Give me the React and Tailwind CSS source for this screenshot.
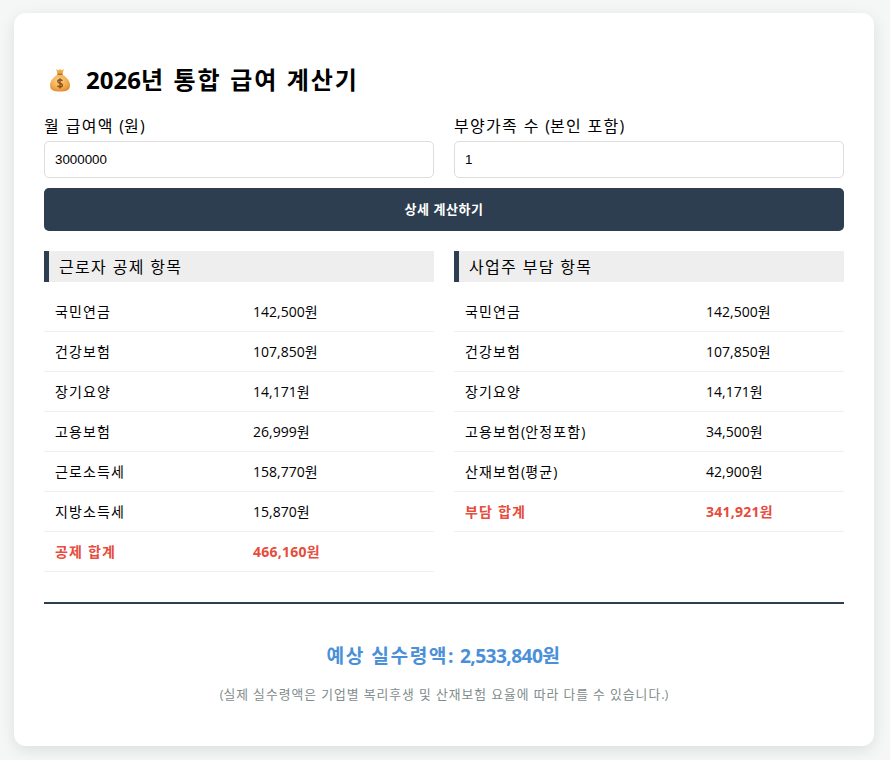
const FONT = "font-['Open_Sans','Noto_Sans_CJK_KR',sans-serif] [word-spacing:0.09em]";

const deductions = [
  ['국민연금', '142,500원'],
  ['건강보험', '107,850원'],
  ['장기요양', '14,171원'],
  ['고용보험', '26,999원'],
  ['근로소득세', '158,770원'],
  ['지방소득세', '15,870원'],
];

const employer = [
  ['국민연금', '142,500원'],
  ['건강보험', '107,850원'],
  ['장기요양', '14,171원'],
  ['고용보험(안정포함)', '34,500원'],
  ['산재보험(평균)', '42,900원'],
];

// Hangul in the reference sits on a full em, Noto's is narrower
const Ko = ({ children }) =>
  children.split(/([가-힣]+)/).map((part, i) =>
    /[가-힣]/.test(part) ? <span key={i} className="tracking-[0.08em]">{part}</span> : part
  );

const MoneyBag = () => (
  <svg width="24" height="24" viewBox="0 0 24 24" className="shrink-0">
    <defs>
      <radialGradient id="bag" cx="0.45" cy="0.35" r="0.8">
        <stop offset="0" stopColor="#fbd58c" />
        <stop offset="0.6" stopColor="#f0a648" />
        <stop offset="1" stopColor="#d9772a" />
      </radialGradient>
    </defs>
    <path d="M8.2 1 L10.4 2.4 L12 1 L13.6 2.4 L15.8 1 L14.6 5.8 H9.4 Z" fill="#f0a93f" />
    <rect x="9.2" y="5.4" width="5.6" height="1.5" rx="0.7" fill="#a8611f" />
    <path d="M9.4 6.8 C5.5 9 2 13 2 17.4 C2 22 6 23.5 12 23.5 C18 23.5 22 22 22 17.4 C22 13 18.5 9 14.6 6.8 Z" fill="url(#bag)" />
    <path d="M14.4 12.8 C13.9 12 13 11.7 12 11.7 C10.7 11.7 9.8 12.4 9.8 13.4 C9.8 15.8 14.4 14.7 14.4 17.2 C14.4 18.2 13.3 18.9 12 18.9 C10.9 18.9 10 18.5 9.5 17.7 M12 10.2 V20.4" fill="none" stroke="#8f4f17" strokeWidth="1.4" />
  </svg>
);

const Field = ({ label, value }) => (
  <div className="flex-1">
    <label className="block text-base leading-[30px] text-black"><Ko>{label}</Ko></label>
    <input
      type="text"
      defaultValue={value}
      className="block w-full h-[37px] px-2.5 border border-[#ddd] rounded-[5px] text-[13.33px] font-['Liberation_Sans',sans-serif] bg-white outline-none"
    />
  </div>
);

const Row = ({ name, amount, nameWidth, total }) => (
  <div className={`flex h-10 items-center border-b border-[#eee] text-sm ${total ? 'font-bold text-[#e74c3c]' : 'text-black'}`}>
    <div className={`pl-[11px] ${nameWidth}`}><Ko>{name}</Ko></div>
    <div className={`px-2.5 ${total ? 'tracking-[0.25px]' : ''}`}><Ko>{amount}</Ko></div>
  </div>
);

const Section = ({ title, rows, total, nameWidth }) => (
  <div className="flex-1">
    <h3 className="h-[31px] flex items-center bg-[#eee] border-l-[5px] border-[#2c3e50] pl-2.5 text-base font-normal text-black">
      <span><Ko>{title}</Ko></span>
    </h3>
    <div className="mt-[10px]">
      {rows.map(([name, amount]) => (
        <Row key={name} name={name} amount={amount} nameWidth={nameWidth} />
      ))}
      <Row name={total[0]} amount={total[1]} nameWidth={nameWidth} total />
    </div>
  </div>
);

export default function App() {
  return (
    <div className={`min-h-[760px] bg-[#f4f7f6] pl-[14px] pr-4 pt-[13px] ${FONT}`}>
      <div className="h-[733px] bg-white rounded-xl shadow-[0_4px_15px_rgba(0,0,0,0.1)] px-[30px] pt-[50px]">
        <h1 className="flex items-center h-[34px] pl-[4px] gap-[14px] text-2xl font-bold text-black [word-spacing:0.1em]">
          <MoneyBag />
          <span><Ko>2026년 통합 급여 계산기</Ko></span>
        </h1>

        <div className="flex gap-5 mt-[14px]">
          <Field label="월 급여액 (원)" value="3000000" />
          <Field label="부양가족 수 (본인 포함)" value="1" />
        </div>

        <button className="block w-full h-[43px] mt-[10px] bg-[#2c3e50] text-white text-[13px] font-bold rounded-[5px] tracking-[0.04em]">
          상세 계산하기
        </button>

        <div className="flex gap-5 mt-5 items-start">
          <Section title="근로자 공제 항목" rows={deductions} total={['공제 합계', '466,160원']} nameWidth="w-[199px]" />
          <Section title="사업주 부담 항목" rows={employer} total={['부담 합계', '341,921원']} nameWidth="w-[242px]" />
        </div>

        <div className="border-t-2 border-[#2c3e50] mt-[30px] pt-[27px] text-center">
          <div className="text-[19.2px] font-bold text-[#4a90d9] leading-[50px]">
            <Ko>예상 실수령액: </Ko>
            <span className="tracking-[-0.6px]">2,533,840</span>
            <Ko>원</Ko>
          </div>
          <p className="text-[12.8px] text-[#7f8c8d] mt-[4px] leading-[18px] [word-spacing:0.06em]"><Ko>(실제 실수령액은 기업별 복리후생 및 산재보험 요율에 따라 다를 수 있습니다.)</Ko></p>
        </div>
      </div>
    </div>
  );
}
